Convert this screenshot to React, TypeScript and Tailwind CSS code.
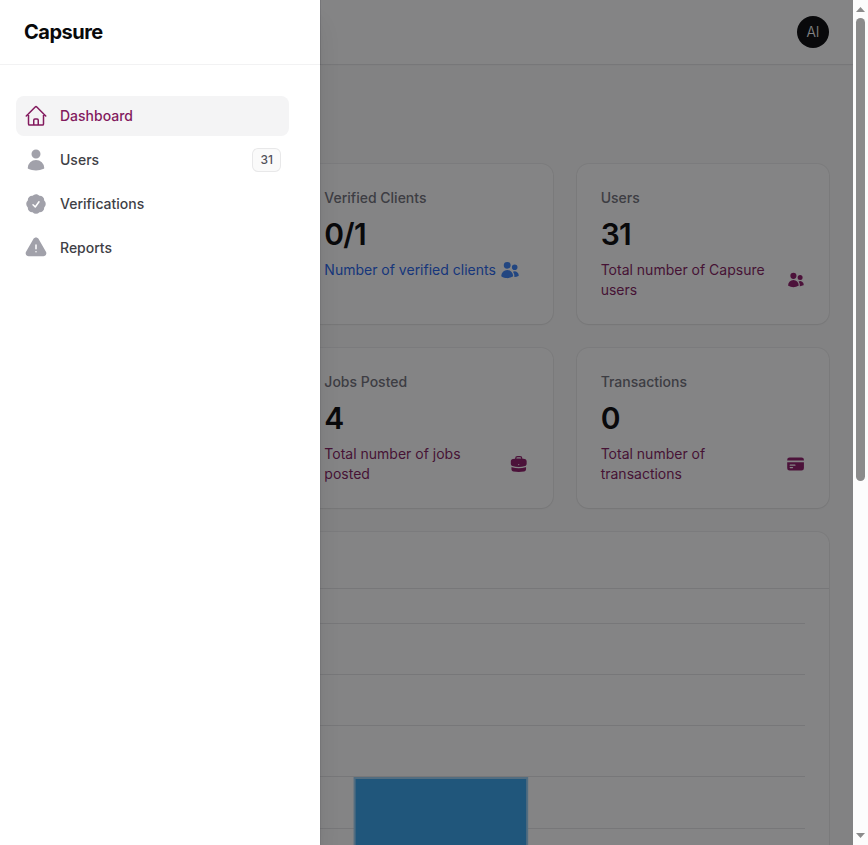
import type { ComponentType, ReactNode } from "react";
import {
  HiBriefcase,
  HiCheckBadge,
  HiCreditCard,
  HiExclamationTriangle,
  HiOutlineHome,
  HiUser,
  HiUsers,
} from "react-icons/hi2";

type Icon = ComponentType<{ className?: string }>;

interface NavItem {
  label: string;
  icon: Icon;
  active?: boolean;
  badge?: string;
}

const navItems: NavItem[] = [
  { label: "Dashboard", icon: HiOutlineHome, active: true },
  { label: "Users", icon: HiUser, badge: "31" },
  { label: "Verifications", icon: HiCheckBadge },
  { label: "Reports", icon: HiExclamationTriangle },
];

function Sidebar() {
  return (
    <aside className="absolute inset-y-0 left-0 flex w-80 flex-col bg-white shadow-xl ring-1 ring-zinc-950/5">
      <header className="flex h-16 shrink-0 items-center px-6 ring-1 ring-zinc-950/5">
        <a href="#" className="text-xl leading-5 font-bold tracking-tight text-zinc-950">
          Capsure
        </a>
      </header>
      <nav className="py-8 pr-[31px] pl-4">
        <ul className="flex flex-col gap-1">
          {navItems.map(({ label, icon: ItemIcon, active, badge }) => (
            <li key={label}>
              <a
                href="#"
                className={`flex h-10 items-center gap-3 rounded-lg p-2 text-sm font-medium ${
                  active ? "bg-zinc-100 text-[#831a5e]" : "text-[#3f3f46]"
                }`}
              >
                <ItemIcon className={`size-6 ${active ? "text-[#831a5e]" : "text-[#a1a1aa]"}`} />
                <span className="flex-1">{label}</span>
                {badge && (
                  <span className="flex h-6 items-center rounded-md bg-zinc-50 px-2 text-xs font-medium text-[#52525b] ring-1 ring-zinc-600/10 ring-inset">
                    {badge}
                  </span>
                )}
              </a>
            </li>
          ))}
        </ul>
      </nav>
    </aside>
  );
}

function Card({ children, className = "" }: { children?: ReactNode; className?: string }) {
  return (
    <section className={`rounded-xl bg-white shadow-xs ring-1 ring-zinc-950/5 ${className}`}>
      {children}
    </section>
  );
}

interface StatProps {
  label: string;
  value: string;
  description: string;
  icon: Icon;
  info?: boolean;
}

function Stat({ label, value, description, icon: StatIcon, info }: StatProps) {
  return (
    <Card className="flex flex-col gap-2 p-6">
      <h2 className="text-sm font-medium text-[#71717a]">{label}</h2>
      <p className="text-3xl font-semibold tracking-tight text-zinc-950">{value}</p>
      <div className={`flex items-center gap-1 text-sm ${info ? "text-[#2563eb]" : "text-[#831a5e]"}`}>
        <span>{description}</span>
        <StatIcon className={`size-5 min-w-0 ${info ? "text-[#3b82f6]" : "text-[#8e1a69]"}`} />
      </div>
    </Card>
  );
}

const gridLines = [10, 61, 112, 163, 215, 266, 317];

function Chart() {
  return (
    <Card>
      <div className="h-14" />
      <div className="border-t border-zinc-200 p-6">
        <svg className="block h-80 w-full" role="img" aria-label="Bar chart">
          {gridLines.map((y) => (
            <line key={y} x1="0" x2="100%" y1={y + 0.5} y2={y + 0.5} stroke="#e4e4e7" />
          ))}
          <rect x="40.5%" y="165" width="22.8%" height="153" fill="#36a2eb" stroke="#9bd0f5" strokeWidth="2" />
        </svg>
      </div>
    </Card>
  );
}

function Scrollbar() {
  return (
    <div aria-hidden="true" className="flex w-[15px] shrink-0 flex-col items-center bg-[#fcfcfc] py-[7px]">
      <svg width="9" height="5" viewBox="0 0 9 5" className="shrink-0" fill="#8b8b8b">
        <path d="M4.5 0 9 5H0z" />
      </svg>
      <div className="flex flex-1 flex-col self-stretch px-[3px] pt-[6px] pb-4">
        <div className="h-[58%] rounded-full bg-[#8b8b8b]" />
      </div>
      <svg width="9" height="5" viewBox="0 0 9 5" className="shrink-0" fill="#8b8b8b">
        <path d="M4.5 5 9 0H0z" />
      </svg>
    </div>
  );
}

export default function App() {
  return (
    <div className="flex h-screen overflow-hidden font-[Inter,sans-serif]">
      <div className="relative min-w-0 flex-1 overflow-hidden bg-zinc-50">
        <header className="flex h-16 items-center justify-end bg-white px-6 shadow-xs ring-1 ring-zinc-950/5">
          <button
            type="button"
            className="flex size-8 items-center justify-center rounded-full bg-zinc-950 text-sm font-light text-white"
          >
            AI
          </button>
        </header>
        <main className="flex flex-col gap-6 px-6 pt-25">
          <div className="grid grid-cols-3 gap-6">
            <Card />
            <Stat label="Verified Clients" value="0/1" description="Number of verified clients" icon={HiUsers} info />
            <Stat label="Users" value="31" description="Total number of Capsure users" icon={HiUsers} />
            <Card />
            <Stat label="Jobs Posted" value="4" description="Total number of jobs posted" icon={HiBriefcase} />
            <Stat label="Transactions" value="0" description="Total number of transactions" icon={HiCreditCard} />
          </div>
          <Chart />
        </main>
        <div className="absolute inset-0 bg-zinc-950/50" />
        <Sidebar />
      </div>
      <Scrollbar />
    </div>
  );
}
